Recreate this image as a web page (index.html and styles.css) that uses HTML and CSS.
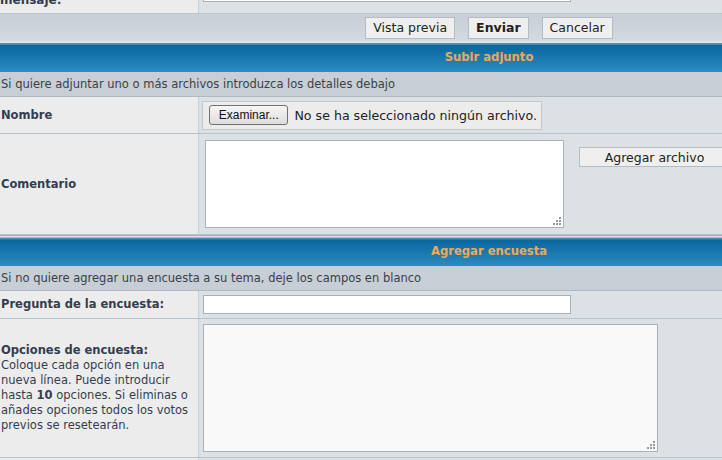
FILE: index.html
```html
<!DOCTYPE html>
<html lang="es">

<head>
    <meta charset="UTF-8">
    <title>Publicar mensaje</title>
    <link rel="stylesheet" href="styles.css">
</head>

<body>
    <table class="forumline">
        <tr>
            <td class="row1 cut"><div class="cut-text"><b>mensaje:</b></div></td>
            <td class="row2 cut"><div class="cut-box"></div></td>
        </tr>
        <tr>
            <td class="catbottom" colspan="2">
                <div class="actions">
                    <button class="btn">Vista previa</button>
                    <button class="btn btn-main">Enviar</button>
                    <button class="btn">Cancelar</button>
                </div>
            </td>
        </tr>

        <!-- adjuntos -->
        <tr>
            <th class="cathead" colspan="2">Subir adjunto</th>
        </tr>
        <tr>
            <td class="row3" colspan="2">Si quiere adjuntar uno o más archivos introduzca los detalles debajo</td>
        </tr>
        <tr>
            <td class="row1 label h-name"><b>Nombre</b></td>
            <td class="row2">
                <div class="file-box">
                    <span class="file-btn">Examinar...</span>
                    <span class="file-name">No se ha seleccionado ningún archivo.</span>
                </div>
            </td>
        </tr>
        <tr>
            <td class="row1 label h-comment"><b>Comentario</b></td>
            <td class="row2">
                <div class="comment-line">
                    <span class="area-wrap">
                        <textarea class="comment"></textarea>
                        <svg class="grip" width="9" height="9" viewBox="0 0 9 9">
                            <rect x="7" y="1" width="2" height="2" fill="#9a9a9a"/>
                            <rect x="4" y="4" width="2" height="2" fill="#9a9a9a"/>
                            <rect x="7" y="4" width="2" height="2" fill="#9a9a9a"/>
                            <rect x="1" y="7" width="2" height="2" fill="#9a9a9a"/>
                            <rect x="4" y="7" width="2" height="2" fill="#9a9a9a"/>
                            <rect x="7" y="7" width="2" height="2" fill="#9a9a9a"/>
                        </svg>
                    </span>
                    <button class="btn btn-add">Agregar archivo</button>
                </div>
            </td>
        </tr>

        <!-- encuesta -->
        <tr>
            <th class="cathead" colspan="2">Agregar encuesta</th>
        </tr>
        <tr>
            <td class="row3" colspan="2">Si no quiere agregar una encuesta a su tema, deje los campos en blanco</td>
        </tr>
        <tr>
            <td class="row1 label h-question"><b>Pregunta de la encuesta:</b></td>
            <td class="row2"><input type="text" class="question"></td>
        </tr>
        <tr>
            <td class="row1 label h-options">
                <b>Opciones de encuesta:</b><br>
                <span class="explain">Coloque cada opción en una nueva línea. Puede introducir hasta <b>10</b> opciones. Si eliminas o añades opciones todos los votos previos se resetearán.</span>
            </td>
            <td class="row2">
                <span class="area-wrap">
                    <textarea class="options"></textarea>
                    <svg class="grip" width="9" height="9" viewBox="0 0 9 9">
                        <rect x="7" y="1" width="2" height="2" fill="#9a9a9a"/>
                        <rect x="4" y="4" width="2" height="2" fill="#9a9a9a"/>
                        <rect x="7" y="4" width="2" height="2" fill="#9a9a9a"/>
                        <rect x="1" y="7" width="2" height="2" fill="#9a9a9a"/>
                        <rect x="4" y="7" width="2" height="2" fill="#9a9a9a"/>
                        <rect x="7" y="7" width="2" height="2" fill="#9a9a9a"/>
                    </svg>
                </span>
            </td>
        </tr>
        <tr>
            <td class="row1 h-last"></td>
            <td class="row2 h-last"></td>
        </tr>
    </table>
</body>

</html>
```

FILE: styles.css
```css
body {
    margin: 0;
    background-color: #e5e9ed;
    font-family: "DejaVu Sans", Verdana, sans-serif;
    font-size: 11.5px;
    color: #323d4f;
    overflow: hidden;
}

.forumline {
    width: 978px;
    border-collapse: collapse;
}

td,
th {
    padding: 0;
}

.row1 {
    width: 198px;
    background-color: #ececec;
    border-right: 1px solid #c8d0d6;
    border-bottom: 1px solid #b9c1c9;
    vertical-align: middle;
}

.row2 {
    background-color: #dce1e6;
    border-left: 1px solid #f3f5f7;
    border-bottom: 1px solid #b9c1c9;
    padding: 0 4px;
    vertical-align: middle;
}

.label {
    width: 189px;
    padding-left: 1px;
    padding-right: 8px;
}

.cut-text {
    height: 13px;
    overflow: hidden;
    display: flex;
    align-items: flex-end;
    line-height: 14px;
    font-size: 12px;
}

.cut-text b {
    margin-bottom: 6px;
}

.cut-box {
    width: 368px;
    height: 2px;
    margin-bottom: 11px;
    box-sizing: border-box;
    background-color: #ffffff;
    border: 1px solid #a8b0b8;
    border-top: none;
}

.catbottom {
    height: 27px;
    background: linear-gradient(#c8ced7, #d3d9df);
    vertical-align: middle;
}

.actions {
    display: flex;
    justify-content: center;
    gap: 13px;
}

.btn {
    font-family: "DejaVu Sans", Verdana, sans-serif;
    font-size: 12.5px;
    color: #222;
    background-color: #efefef;
    border: 1px solid #b5bbc1;
    height: 22px;
    padding: 0 7px;
}

.btn-main {
    font-weight: bold;
}

.cathead {
    height: 31px;
    padding-top: 1px;
    background: linear-gradient(#dce6e6 0, #dce6e6 2px, #5b93ae 2px, #4887a6 4px, #0a659e 4px, #2a8dbf 100%);
    color: #f0a858;
    font-size: 11.6px;
    font-weight: bold;
    text-align: center;
    box-sizing: border-box;
}

.row3 {
    height: 24px;
    background-color: #c7ced6;
    padding-left: 1px;
    border-bottom: 1px solid #b0b8c0;
    color: #3a3f48;
}

.h-name {
    height: 36px;
}

.h-comment {
    height: 100px;
}

.h-question {
    height: 27px;
}

.h-options {
    height: 138px;
    line-height: 15px;
}

.h-last {
    height: 10px;
    border-bottom: none;
}

.file-box {
    display: inline-flex;
    align-items: center;
    gap: 6px;
    width: 340px;
    height: 29px;
    box-sizing: border-box;
    padding: 0 4px 0 6px;
    background-color: #ececec;
    border: 1px solid #c3c8cd;
    margin-left: -1px;
}

.file-btn {
    font-family: "Liberation Sans", Arial, sans-serif;
    font-size: 12px;
    color: #111;
    width: 80px;
    height: 20px;
    line-height: 18px;
    text-align: center;
    box-sizing: border-box;
    border: 1px solid #707070;
    border-radius: 3px;
    background: linear-gradient(#f6f6f6, #dddddd);
}

.file-name {
    font-size: 12.6px;
    color: #222;
    white-space: nowrap;
}

.comment-line {
    display: flex;
    align-items: flex-start;
    gap: 15px;
    padding-left: 2px;
}

.area-wrap {
    position: relative;
    display: block;
    width: max-content;
}

.grip {
    position: absolute;
    right: 3px;
    bottom: 3px;
}

.comment {
    display: block;
    width: 359px;
    height: 88px;
    box-sizing: border-box;
    border: 1px solid #a9b1b9;
    background-color: #ffffff;
    margin: 0;
    resize: none;
}

.btn-add {
    width: 151px;
    height: 20px;
    margin-top: 7px;
    font-size: 12.5px;
}

.question {
    display: block;
    width: 368px;
    height: 19px;
    box-sizing: border-box;
    border: 1px solid #a8b0b8;
    background-color: #ffffff;
    margin: 0;
}

.options {
    display: block;
    width: 455px;
    height: 128px;
    box-sizing: border-box;
    border: 1px solid #a8b0b8;
    background-color: #f9f9f9;
    margin: 0;
    resize: none;
}
```
